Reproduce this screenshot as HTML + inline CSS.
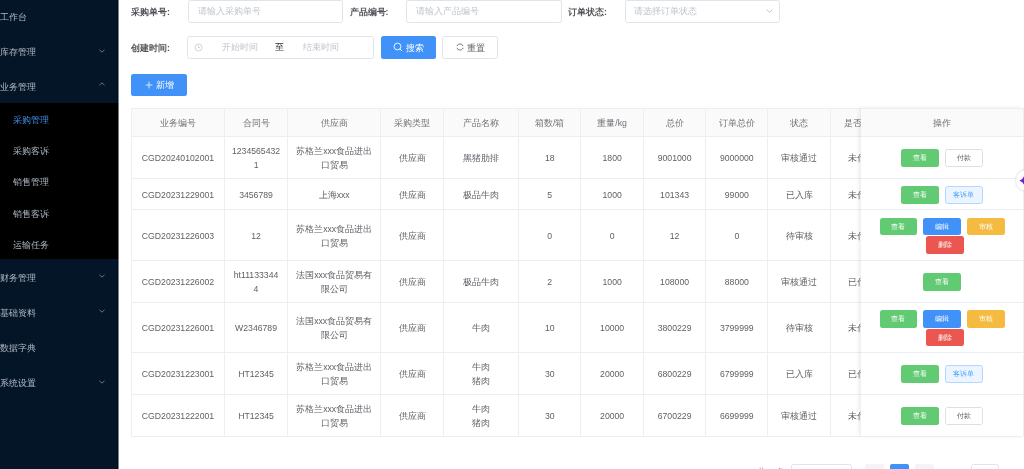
<!DOCTYPE html><html><head><meta charset="utf-8"><style>
*{margin:0;padding:0;box-sizing:border-box}
html,body{width:1024px;height:469px;overflow:hidden;background:#fff;font-family:"Liberation Sans",sans-serif;}
.a{position:absolute}
.t{position:absolute;white-space:nowrap;font-size:8.68px;line-height:14px}
.side{position:absolute;left:0;top:0;width:118px;height:469px;background:#041527}
.sub{position:absolute;left:0;top:103px;width:118px;height:156px;background:#000}
.mi{position:absolute;left:0;font-size:8.68px;line-height:12px;color:#b0bac6;white-space:nowrap;font-weight:500}
.chev{position:absolute;left:99.3px;width:6px;height:4px}
.inp{position:absolute;border:1px solid #dfe3ea;border-radius:2.5px;background:#fff}
.ph{color:#c0c4cc}
.lbl{position:absolute;font-size:8.68px;line-height:12px;color:#505257;font-weight:700;white-space:nowrap}
.btn{position:absolute;border-radius:2.5px;font-size:8.68px;color:#fff;text-align:center;white-space:nowrap}
.hl{position:absolute;height:1px;background:#ebeef3}
.vl{position:absolute;width:1px;background:#ebeef3}
.c{position:absolute;text-align:center;font-size:8.68px;line-height:14px;color:#5f6166;white-space:nowrap;display:flex;align-items:center;justify-content:center;flex-direction:column;padding-top:1.8px}
.h{color:#6f7277;font-weight:normal;padding-top:1.4px}
.ob{position:absolute;height:17.5px;width:37.6px;border-radius:2.5px;font-size:7.44px;line-height:17.5px;text-align:center;color:#fff;white-space:nowrap;font-weight:500}
</style></head><body><div id="root" style="position:absolute;left:0;top:0;width:1024px;height:469px;will-change:transform">
<div class="side"></div><div class="a" style="left:117px;top:0;width:1px;height:469px;background:#000c1c"></div><div class="a" style="left:118px;top:0;width:1px;height:469px;background:#7d858f"></div><div class="sub"></div><div class="a" style="left:118px;top:103px;width:1px;height:156px;background:#777"></div>
<div class="mi" style="top:11.2px;left:0px">工作台</div>
<div class="mi" style="top:45.8px;left:0px">库存管理</div>
<svg class="chev" style="top:48.5px" viewBox="0 0 6 4"><path d="M0.5 0.8 L3 3.2 L5.5 0.8" fill="none" stroke="#8a94a0" stroke-width="0.75"/></svg>
<div class="mi" style="top:81.0px;left:0px">业务管理</div>
<svg class="chev" style="top:82.0px" viewBox="0 0 6 4"><path d="M0.5 3.2 L3 0.8 L5.5 3.2" fill="none" stroke="#8a94a0" stroke-width="0.75"/></svg>
<div class="mi" style="top:271.6px;left:0px">财务管理</div>
<svg class="chev" style="top:274.3px" viewBox="0 0 6 4"><path d="M0.5 0.8 L3 3.2 L5.5 0.8" fill="none" stroke="#8a94a0" stroke-width="0.75"/></svg>
<div class="mi" style="top:306.5px;left:0px">基础资料</div>
<svg class="chev" style="top:309.2px" viewBox="0 0 6 4"><path d="M0.5 0.8 L3 3.2 L5.5 0.8" fill="none" stroke="#8a94a0" stroke-width="0.75"/></svg>
<div class="mi" style="top:341.8px;left:0px">数据字典</div>
<div class="mi" style="top:376.8px;left:0px">系统设置</div>
<svg class="chev" style="top:379.5px" viewBox="0 0 6 4"><path d="M0.5 0.8 L3 3.2 L5.5 0.8" fill="none" stroke="#8a94a0" stroke-width="0.75"/></svg>
<div class="mi" style="top:113.9px;left:13px;color:#3f8ee8">采购管理</div>
<div class="mi" style="top:145.4px;left:13px;color:#aeb8c4">采购客诉</div>
<div class="mi" style="top:176.4px;left:13px;color:#aeb8c4">销售管理</div>
<div class="mi" style="top:207.6px;left:13px;color:#aeb8c4">销售客诉</div>
<div class="mi" style="top:238.9px;left:13px;color:#aeb8c4">运输任务</div>
<div class="lbl" style="left:131px;top:5.9px">采购单号:</div>
<div class="inp" style="left:187.6px;top:0px;width:155.4px;height:23px"></div>
<div class="t ph" style="left:197.5px;top:4.2px">请输入采购单号</div>
<div class="lbl" style="left:349.6px;top:5.9px">产品编号:</div>
<div class="inp" style="left:405.6px;top:0px;width:156.4px;height:23px"></div>
<div class="t ph" style="left:415.5px;top:4.2px">请输入产品编号</div>
<div class="lbl" style="left:568px;top:5.9px">订单状态:</div>
<div class="inp" style="left:624.7px;top:0px;width:155.3px;height:23px"></div>
<div class="t ph" style="left:634px;top:4.2px">请选择订单状态</div>
<svg class="a" style="left:766px;top:9px" width="7" height="4" viewBox="0 0 7 4"><path d="M0.5 0.5 L3.5 3.3 L6.5 0.5" fill="none" stroke="#c0c4cc" stroke-width="1"/></svg>
<div class="lbl" style="left:131px;top:42px">创建时间:</div>
<div class="inp" style="left:187.3px;top:36.2px;width:187px;height:22.8px"></div>
<svg class="a" style="left:194px;top:43px" width="9" height="9" viewBox="0 0 9 9"><circle cx="4.5" cy="4.5" r="3.5" fill="none" stroke="#c0c4cc" stroke-width="0.7"/><path d="M4.5 2.5 V4.6 H6" fill="none" stroke="#c0c4cc" stroke-width="0.7"/></svg>
<div class="t ph" style="left:221.8px;top:40.3px">开始时间</div>
<div class="t" style="left:275px;top:40.3px;color:#303133">至</div>
<div class="t ph" style="left:302.5px;top:40.3px">结束时间</div>
<div class="btn" style="left:380.9px;top:36.2px;width:55.1px;height:22.5px;background:#4092f8"></div>
<svg class="a" style="left:393.3px;top:42.3px" width="10" height="10" viewBox="0 0 10 10"><circle cx="4.5" cy="4.5" r="3.4" fill="none" stroke="#fff" stroke-width="0.9"/><path d="M7 7 L8.8 8.8" stroke="#fff" stroke-width="0.9" stroke-linecap="round"/></svg>
<div class="t" style="left:405.5px;top:40.9px;color:#fff;font-weight:500">搜索</div>
<div class="inp" style="left:442.2px;top:36.2px;width:55.6px;height:22.5px"></div>
<svg class="a" style="left:454.8px;top:42.4px" width="10" height="10" viewBox="0 0 10 10"><path d="M2.46 3.22 A3.1 3.1 0 0 1 7.99 4.20 M7.68 6.55 A3.1 3.1 0 0 1 2.01 5.80" fill="none" stroke="#606266" stroke-width="0.85"/><path d="M1.89 4.04 L1.64 2.65 L3.28 3.80Z M8.18 5.68 L8.55 7.05 L6.82 6.05Z" fill="#606266"/></svg>
<div class="t" style="left:467.3px;top:40.9px;color:#606266;font-weight:500">重置</div>
<div class="btn" style="left:131.1px;top:73.5px;width:55.9px;height:22.5px;background:#4092f8"></div>
<svg class="a" style="left:145px;top:80.5px" width="8" height="8" viewBox="0 0 8 8"><path d="M4 0.6 V7.4 M0.6 4 H7.4" stroke="#fff" stroke-width="0.75"/></svg>
<div class="t" style="left:156px;top:77.6px;color:#fff;font-weight:500">新增</div>
<div class="a" style="left:131.4px;top:108.1px;width:891.6px;height:28.200000000000017px;background:#fafafa"></div>
<div class="c h" style="left:131.4px;top:108.1px;width:93.19999999999999px;height:28.200000000000017px">业务编号</div>
<div class="c h" style="left:224.6px;top:108.1px;width:62.900000000000006px;height:28.200000000000017px">合同号</div>
<div class="c h" style="left:287.5px;top:108.1px;width:93.30000000000001px;height:28.200000000000017px">供应商</div>
<div class="c h" style="left:380.8px;top:108.1px;width:62.599999999999966px;height:28.200000000000017px">采购类型</div>
<div class="c h" style="left:443.4px;top:108.1px;width:75.30000000000007px;height:28.200000000000017px">产品名称</div>
<div class="c h" style="left:518.7px;top:108.1px;width:62.19999999999993px;height:28.200000000000017px">箱数/箱</div>
<div class="c h" style="left:580.9px;top:108.1px;width:62.5px;height:28.200000000000017px">重量/kg</div>
<div class="c h" style="left:643.4px;top:108.1px;width:62.39999999999998px;height:28.200000000000017px">总价</div>
<div class="c h" style="left:705.8px;top:108.1px;width:62.0px;height:28.200000000000017px">订单总价</div>
<div class="c h" style="left:767.8px;top:108.1px;width:62.80000000000007px;height:28.200000000000017px">状态</div>
<div class="c h" style="left:830.6px;top:108.1px;width:62.39999999999998px;height:28.200000000000017px">是否付款</div>
<div class="c" style="left:131.4px;top:136.3px;width:93.19999999999999px;height:42.29999999999998px">CGD20240102001</div>
<div class="c" style="left:224.6px;top:136.3px;width:62.900000000000006px;height:42.29999999999998px">1234565432<br>1</div>
<div class="c" style="left:287.5px;top:136.3px;width:93.30000000000001px;height:42.29999999999998px">苏格兰xxx食品进出<br>口贸易</div>
<div class="c" style="left:380.8px;top:136.3px;width:62.599999999999966px;height:42.29999999999998px">供应商</div>
<div class="c" style="left:443.4px;top:136.3px;width:75.30000000000007px;height:42.29999999999998px">黑猪肋排</div>
<div class="c" style="left:518.7px;top:136.3px;width:62.19999999999993px;height:42.29999999999998px">18</div>
<div class="c" style="left:580.9px;top:136.3px;width:62.5px;height:42.29999999999998px">1800</div>
<div class="c" style="left:643.4px;top:136.3px;width:62.39999999999998px;height:42.29999999999998px">9001000</div>
<div class="c" style="left:705.8px;top:136.3px;width:62.0px;height:42.29999999999998px">9000000</div>
<div class="c" style="left:767.8px;top:136.3px;width:62.80000000000007px;height:42.29999999999998px">审核通过</div>
<div class="c" style="left:830.6px;top:136.3px;width:62.39999999999998px;height:42.29999999999998px">未付款</div>
<div class="c" style="left:131.4px;top:178.6px;width:93.19999999999999px;height:30.599999999999994px">CGD20231229001</div>
<div class="c" style="left:224.6px;top:178.6px;width:62.900000000000006px;height:30.599999999999994px">3456789</div>
<div class="c" style="left:287.5px;top:178.6px;width:93.30000000000001px;height:30.599999999999994px">上海xxx</div>
<div class="c" style="left:380.8px;top:178.6px;width:62.599999999999966px;height:30.599999999999994px">供应商</div>
<div class="c" style="left:443.4px;top:178.6px;width:75.30000000000007px;height:30.599999999999994px">极品牛肉</div>
<div class="c" style="left:518.7px;top:178.6px;width:62.19999999999993px;height:30.599999999999994px">5</div>
<div class="c" style="left:580.9px;top:178.6px;width:62.5px;height:30.599999999999994px">1000</div>
<div class="c" style="left:643.4px;top:178.6px;width:62.39999999999998px;height:30.599999999999994px">101343</div>
<div class="c" style="left:705.8px;top:178.6px;width:62.0px;height:30.599999999999994px">99000</div>
<div class="c" style="left:767.8px;top:178.6px;width:62.80000000000007px;height:30.599999999999994px">已入库</div>
<div class="c" style="left:830.6px;top:178.6px;width:62.39999999999998px;height:30.599999999999994px">未付款</div>
<div class="c" style="left:131.4px;top:209.2px;width:93.19999999999999px;height:51.19999999999999px">CGD20231226003</div>
<div class="c" style="left:224.6px;top:209.2px;width:62.900000000000006px;height:51.19999999999999px">12</div>
<div class="c" style="left:287.5px;top:209.2px;width:93.30000000000001px;height:51.19999999999999px">苏格兰xxx食品进出<br>口贸易</div>
<div class="c" style="left:380.8px;top:209.2px;width:62.599999999999966px;height:51.19999999999999px">供应商</div>
<div class="c" style="left:443.4px;top:209.2px;width:75.30000000000007px;height:51.19999999999999px"></div>
<div class="c" style="left:518.7px;top:209.2px;width:62.19999999999993px;height:51.19999999999999px">0</div>
<div class="c" style="left:580.9px;top:209.2px;width:62.5px;height:51.19999999999999px">0</div>
<div class="c" style="left:643.4px;top:209.2px;width:62.39999999999998px;height:51.19999999999999px">12</div>
<div class="c" style="left:705.8px;top:209.2px;width:62.0px;height:51.19999999999999px">0</div>
<div class="c" style="left:767.8px;top:209.2px;width:62.80000000000007px;height:51.19999999999999px">待审核</div>
<div class="c" style="left:830.6px;top:209.2px;width:62.39999999999998px;height:51.19999999999999px">未付款</div>
<div class="c" style="left:131.4px;top:260.4px;width:93.19999999999999px;height:41.80000000000001px">CGD20231226002</div>
<div class="c" style="left:224.6px;top:260.4px;width:62.900000000000006px;height:41.80000000000001px">ht11133344<br>4</div>
<div class="c" style="left:287.5px;top:260.4px;width:93.30000000000001px;height:41.80000000000001px">法国xxx食品贸易有<br>限公司</div>
<div class="c" style="left:380.8px;top:260.4px;width:62.599999999999966px;height:41.80000000000001px">供应商</div>
<div class="c" style="left:443.4px;top:260.4px;width:75.30000000000007px;height:41.80000000000001px">极品牛肉</div>
<div class="c" style="left:518.7px;top:260.4px;width:62.19999999999993px;height:41.80000000000001px">2</div>
<div class="c" style="left:580.9px;top:260.4px;width:62.5px;height:41.80000000000001px">1000</div>
<div class="c" style="left:643.4px;top:260.4px;width:62.39999999999998px;height:41.80000000000001px">108000</div>
<div class="c" style="left:705.8px;top:260.4px;width:62.0px;height:41.80000000000001px">88000</div>
<div class="c" style="left:767.8px;top:260.4px;width:62.80000000000007px;height:41.80000000000001px">审核通过</div>
<div class="c" style="left:830.6px;top:260.4px;width:62.39999999999998px;height:41.80000000000001px">已付款</div>
<div class="c" style="left:131.4px;top:302.2px;width:93.19999999999999px;height:50.400000000000034px">CGD20231226001</div>
<div class="c" style="left:224.6px;top:302.2px;width:62.900000000000006px;height:50.400000000000034px">W2346789</div>
<div class="c" style="left:287.5px;top:302.2px;width:93.30000000000001px;height:50.400000000000034px">法国xxx食品贸易有<br>限公司</div>
<div class="c" style="left:380.8px;top:302.2px;width:62.599999999999966px;height:50.400000000000034px">供应商</div>
<div class="c" style="left:443.4px;top:302.2px;width:75.30000000000007px;height:50.400000000000034px">牛肉</div>
<div class="c" style="left:518.7px;top:302.2px;width:62.19999999999993px;height:50.400000000000034px">10</div>
<div class="c" style="left:580.9px;top:302.2px;width:62.5px;height:50.400000000000034px">10000</div>
<div class="c" style="left:643.4px;top:302.2px;width:62.39999999999998px;height:50.400000000000034px">3800229</div>
<div class="c" style="left:705.8px;top:302.2px;width:62.0px;height:50.400000000000034px">3799999</div>
<div class="c" style="left:767.8px;top:302.2px;width:62.80000000000007px;height:50.400000000000034px">待审核</div>
<div class="c" style="left:830.6px;top:302.2px;width:62.39999999999998px;height:50.400000000000034px">未付款</div>
<div class="c" style="left:131.4px;top:352.6px;width:93.19999999999999px;height:41.69999999999999px">CGD20231223001</div>
<div class="c" style="left:224.6px;top:352.6px;width:62.900000000000006px;height:41.69999999999999px">HT12345</div>
<div class="c" style="left:287.5px;top:352.6px;width:93.30000000000001px;height:41.69999999999999px">苏格兰xxx食品进出<br>口贸易</div>
<div class="c" style="left:380.8px;top:352.6px;width:62.599999999999966px;height:41.69999999999999px">供应商</div>
<div class="c" style="left:443.4px;top:352.6px;width:75.30000000000007px;height:41.69999999999999px">牛肉<br>猪肉</div>
<div class="c" style="left:518.7px;top:352.6px;width:62.19999999999993px;height:41.69999999999999px">30</div>
<div class="c" style="left:580.9px;top:352.6px;width:62.5px;height:41.69999999999999px">20000</div>
<div class="c" style="left:643.4px;top:352.6px;width:62.39999999999998px;height:41.69999999999999px">6800229</div>
<div class="c" style="left:705.8px;top:352.6px;width:62.0px;height:41.69999999999999px">6799999</div>
<div class="c" style="left:767.8px;top:352.6px;width:62.80000000000007px;height:41.69999999999999px">已入库</div>
<div class="c" style="left:830.6px;top:352.6px;width:62.39999999999998px;height:41.69999999999999px">已付款</div>
<div class="c" style="left:131.4px;top:394.3px;width:93.19999999999999px;height:41.80000000000001px">CGD20231222001</div>
<div class="c" style="left:224.6px;top:394.3px;width:62.900000000000006px;height:41.80000000000001px">HT12345</div>
<div class="c" style="left:287.5px;top:394.3px;width:93.30000000000001px;height:41.80000000000001px">苏格兰xxx食品进出<br>口贸易</div>
<div class="c" style="left:380.8px;top:394.3px;width:62.599999999999966px;height:41.80000000000001px">供应商</div>
<div class="c" style="left:443.4px;top:394.3px;width:75.30000000000007px;height:41.80000000000001px">牛肉<br>猪肉</div>
<div class="c" style="left:518.7px;top:394.3px;width:62.19999999999993px;height:41.80000000000001px">30</div>
<div class="c" style="left:580.9px;top:394.3px;width:62.5px;height:41.80000000000001px">20000</div>
<div class="c" style="left:643.4px;top:394.3px;width:62.39999999999998px;height:41.80000000000001px">6700229</div>
<div class="c" style="left:705.8px;top:394.3px;width:62.0px;height:41.80000000000001px">6699999</div>
<div class="c" style="left:767.8px;top:394.3px;width:62.80000000000007px;height:41.80000000000001px">审核通过</div>
<div class="c" style="left:830.6px;top:394.3px;width:62.39999999999998px;height:41.80000000000001px">未付款</div>
<div class="hl" style="left:131.4px;top:107.6px;width:891.6px"></div>
<div class="hl" style="left:131.4px;top:135.8px;width:891.6px"></div>
<div class="hl" style="left:131.4px;top:178.1px;width:891.6px"></div>
<div class="hl" style="left:131.4px;top:208.7px;width:891.6px"></div>
<div class="hl" style="left:131.4px;top:259.9px;width:891.6px"></div>
<div class="hl" style="left:131.4px;top:301.7px;width:891.6px"></div>
<div class="hl" style="left:131.4px;top:352.1px;width:891.6px"></div>
<div class="hl" style="left:131.4px;top:393.8px;width:891.6px"></div>
<div class="hl" style="left:131.4px;top:435.6px;width:891.6px"></div>
<div class="vl" style="left:130.9px;top:108.1px;height:328.0px"></div>
<div class="vl" style="left:224.1px;top:108.1px;height:328.0px"></div>
<div class="vl" style="left:287.0px;top:108.1px;height:328.0px"></div>
<div class="vl" style="left:380.3px;top:108.1px;height:328.0px"></div>
<div class="vl" style="left:442.9px;top:108.1px;height:328.0px"></div>
<div class="vl" style="left:518.2px;top:108.1px;height:328.0px"></div>
<div class="vl" style="left:580.4px;top:108.1px;height:328.0px"></div>
<div class="vl" style="left:642.9px;top:108.1px;height:328.0px"></div>
<div class="vl" style="left:705.3px;top:108.1px;height:328.0px"></div>
<div class="vl" style="left:767.3px;top:108.1px;height:328.0px"></div>
<div class="vl" style="left:830.1px;top:108.1px;height:328.0px"></div>
<div class="a" style="left:860.6px;top:108.1px;width:162.39999999999998px;height:328.0px;background:#fff;box-shadow:-2px 0 4px rgba(0,0,0,0.08)"></div>
<div class="a" style="left:860.6px;top:108.1px;width:162.39999999999998px;height:28.200000000000017px;background:#fafafa"></div>
<div class="c h" style="left:860.6px;top:108.1px;width:162.39999999999998px;height:28.200000000000017px">操作</div>
<div class="hl" style="left:860.6px;top:107.6px;width:162.39999999999998px"></div>
<div class="hl" style="left:860.6px;top:135.8px;width:162.39999999999998px"></div>
<div class="hl" style="left:860.6px;top:178.1px;width:162.39999999999998px"></div>
<div class="hl" style="left:860.6px;top:208.7px;width:162.39999999999998px"></div>
<div class="hl" style="left:860.6px;top:259.9px;width:162.39999999999998px"></div>
<div class="hl" style="left:860.6px;top:301.7px;width:162.39999999999998px"></div>
<div class="hl" style="left:860.6px;top:352.1px;width:162.39999999999998px"></div>
<div class="hl" style="left:860.6px;top:393.8px;width:162.39999999999998px"></div>
<div class="hl" style="left:860.6px;top:435.6px;width:162.39999999999998px"></div>
<div class="vl" style="left:1022.5px;top:108.1px;height:328.0px"></div>
<div class="ob" style="left:901.0px;top:149.0px;background:#63ca74">查看</div>
<div class="ob" style="left:945.1px;top:149.0px;background:#fff;border:1px solid #dcdfe6;color:#606266;line-height:15.5px">付款</div>
<div class="ob" style="left:901.0px;top:186.0px;background:#63ca74">查看</div>
<div class="ob" style="left:945.1px;top:186.0px;background:#ecf5ff;border:1px solid #b3d8ff;color:#409eff;line-height:15.5px">客诉单</div>
<div class="ob" style="left:879.6px;top:217.8px;background:#63ca74">查看</div>
<div class="ob" style="left:923.3px;top:217.8px;background:#4092f8">编辑</div>
<div class="ob" style="left:967.1px;top:217.8px;background:#f5bb40">审核</div>
<div class="ob" style="left:926.3px;top:236.4px;background:#eb5750">删除</div>
<div class="ob" style="left:923.1px;top:273.1px;background:#63ca74">查看</div>
<div class="ob" style="left:879.6px;top:310.0px;background:#63ca74">查看</div>
<div class="ob" style="left:923.3px;top:310.0px;background:#4092f8">编辑</div>
<div class="ob" style="left:967.1px;top:310.0px;background:#f5bb40">审核</div>
<div class="ob" style="left:926.3px;top:328.7px;background:#eb5750">删除</div>
<div class="ob" style="left:901.0px;top:365.2px;background:#63ca74">查看</div>
<div class="ob" style="left:945.1px;top:365.2px;background:#ecf5ff;border:1px solid #b3d8ff;color:#409eff;line-height:15.5px">客诉单</div>
<div class="ob" style="left:901.0px;top:407.0px;background:#63ca74">查看</div>
<div class="ob" style="left:945.1px;top:407.0px;background:#fff;border:1px solid #dcdfe6;color:#606266;line-height:15.5px">付款</div>
<div class="a" style="left:1015.5px;top:170.2px;width:21px;height:21px;border-radius:50%;background:#fff;box-shadow:0 0 3px rgba(0,0,0,0.2)"></div>
<svg class="a" style="left:1019.2px;top:175.2px" width="11" height="11" viewBox="0 0 10 10"><path d="M5 0.4 Q6.3 3.7 9.6 5 Q6.3 6.3 5 9.6 Q3.7 6.3 0.4 5 Q3.7 3.7 5 0.4Z" fill="#6b22d8"/></svg>
<div class="t" style="left:757px;top:465.3px;color:#8a8c90">共 7 条</div>
<div class="inp" style="left:790.7px;top:464.3px;width:61.8px;height:22px"></div>
<div class="a" style="left:865.4px;top:464.2px;width:18.8px;height:18px;background:#f4f4f5;border-radius:2px"></div>
<div class="a" style="left:890.3px;top:464.2px;width:18.8px;height:18px;background:#4092f8;border-radius:2px"></div>
<div class="a" style="left:915.4px;top:464.2px;width:18.6px;height:18px;background:#f4f4f5;border-radius:2px"></div>
<div class="inp" style="left:971.3px;top:464.2px;width:27.9px;height:18px"></div>
</div></body></html>
